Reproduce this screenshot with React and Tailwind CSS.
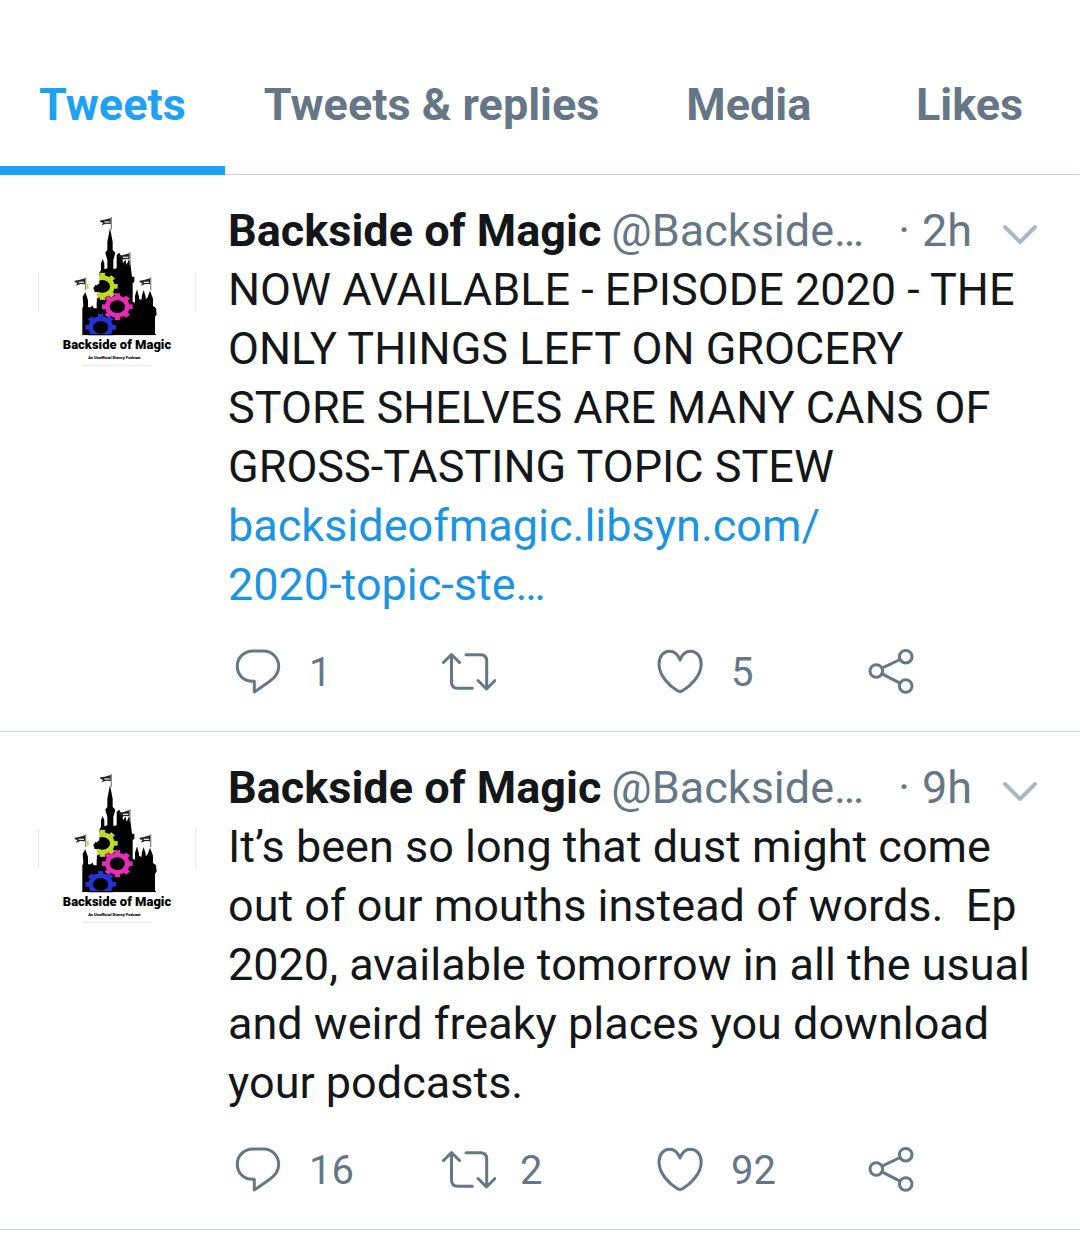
import React from 'react'

const tabs = [
  { id: 'tweets', label: 'Tweets', grow: false },
  { id: 'replies', label: 'Tweets & replies', grow: false },
  { id: 'media', label: 'Media', grow: true },
  { id: 'likes', label: 'Likes', grow: true },
]

const tweets = [
  {
    id: 1,
    time: '2h',
    text: 'NOW AVAILABLE - EPISODE 2020 - THE ONLY THINGS LEFT ON GROCERY STORE SHELVES ARE MANY CANS OF GROSS-TASTING TOPIC STEW',
    link: ['backsideofmagic.libsyn.com/', '2020-topic-ste…'],
    replies: 1,
    retweets: null,
    likes: 5,
  },
  {
    id: 2,
    time: '9h',
    text: 'It’s been so long that dust might come out of our mouths instead of words.  Ep 2020, available tomorrow in all the usual and weird freaky places you download your podcasts.',
    link: null,
    replies: 16,
    retweets: 2,
    likes: 92,
  },
]

const gearTeeth = [0, 45, 90, 135, 180, 225, 270, 315]

const Gear = ({ x, y, color }) => (
  <g transform={`translate(${x} ${y})`}>
    {gearTeeth.map((angle) => (
      <rect key={angle} x="-8" y="-46" width="16" height="18" fill={color} transform={`scale(1 0.88) rotate(${angle})`} />
    ))}
    <ellipse rx="30" ry="26" fill="#000" stroke={color} strokeWidth="14" />
  </g>
)

const Flag = ({ x, y }) => (
  <g transform={`translate(${x} ${y})`}>
    <path d="M0 0V38" stroke="#888" strokeWidth="4" />
    <path d="M-2 3L-20 8L-33 10V15L-25 17L-29 25L-16 20L-2 21Z" fill="#222" />
    <path d="M-21 15H-5" stroke="#ddd" strokeWidth="4" />
  </g>
)

const Avatar = () => (
  <svg viewBox="24 27 474 474" className="h-[158px] w-[158px]" role="img" aria-label="Backside of Magic">
    <path d="M25 215V335M497 215V335" stroke="#e6e6e6" strokeWidth="3" />
    <path d="M155 496H365" stroke="#f1f1f1" strokeWidth="7" />
    <path
      d="M157 404V325L160 318L158 290L166 277L174 300V322H183L187 316L191 325H200V295H206V222L213 210V190L218 177L223 190V208L232 205V180L226 158L232 150V125L240 84L248 125V150L256 158L250 180V207L260 205V165L268 158L275 172L280 190L286 178L290 194L296 180L300 182L306 230H313V245L308 250V305L315 308V288L321 268L327 290V296L334 300L336 286L341 270L347 290V298L353 292L360 272L369 296V318L378 324L380 344L375 350V404Z"
      fill="#000"
    />
    <Flag x={244} y={51} />
    <Flag x={300} y={157} />
    <Flag x={167} y={232} />
    <Flag x={362} y={232} />
    <Gear x={217} y={259} color="#bddb24" />
    <path d="M176 220H208V250L200 256V306H176Z" fill="#fff" />
    <path d="M190 264L197 254L204 260V276H194Z" fill="#000" />
    <Gear x={262} y={320} color="#e62bb5" />
    <Gear x={212} y={382} color="#2233d8" />
    <path d="M157 404H378" stroke="#000" strokeWidth="4" />
    <rect x="157" y="406" width="222" height="20" fill="#fff" />
    <text x="261" y="447" textAnchor="middle" fontSize="39" fontWeight="900" fill="#000">
      Backside of Magic
    </text>
    <text x="253" y="478" textAnchor="middle" fontSize="12" fontWeight="900" fill="#000">
      An Unofficial Disney Podcast
    </text>
  </svg>
)

const Icon = ({ children }) => (
  <svg
    viewBox="0 0 54 48"
    className="h-12 w-[54px] shrink-0"
    fill="none"
    stroke="currentColor"
    strokeWidth="3"
    strokeLinecap="round"
    strokeLinejoin="round"
    aria-hidden="true"
  >
    {children}
  </svg>
)

const ReplyIcon = () => (
  <Icon>
    <path d="M22 4h10.500C41 4 47.700 11 47.700 19.500c0 6.500-3.500 11-9.200 15L23.300 45V34.300H21.500C13 34.300 6.300 28 6.300 19.300S13 4 22 4Z" />
  </Icon>
)

const RetweetIcon = () => (
  <Icon>
    <path d="M1.500 15.500L9.500 7.500L17.500 15.500M9.500 8V35q0 6.300 6.300 6.300H30.300" />
    <path d="M24 7.700H38.500q6.200 0 6.200 6.200V41.500M36 33.500L44.500 42L53 33.500" />
  </Icon>
)

const LikeIcon = () => (
  <Icon>
    <path d="M27 13C25 7.500 21.500 4.200 16.500 4.200C10.500 4.200 6 9.500 6 17C6 29 17 39.500 24.500 43.700Q27 45.200 29.500 43.700C37 39.500 48.200 29 48.200 17C48.200 9.500 43.500 4.200 37.500 4.200C32.500 4.200 29 7.500 27 13Z" />
  </Icon>
)

const ShareIcon = () => (
  <Icon>
    <circle cx="12.300" cy="24" r="6.300" />
    <circle cx="41.700" cy="9.700" r="6.300" />
    <circle cx="41.700" cy="39" r="6.300" />
    <path d="M18 21.200L36 12.500M18 26.800L36 36.200" />
  </Icon>
)

const Action = ({ label, icon: ActionIcon, count }) => (
  <button type="button" aria-label={label} className="flex h-12 items-center gap-6 text-[40px] leading-[48px]">
    <ActionIcon />
    {count && <span className="pt-1">{count}</span>}
  </button>
)

const Tweet = ({ tweet }) => (
  <article className="flex items-start border-b border-[#ccd6dd] pt-[26px] pb-9 pl-[38px]">
    <a href="#profile" className="mt-2 shrink-0">
      <Avatar />
    </a>
    <div className="ml-8 min-w-0 flex-1">
      <header className="flex items-center pr-[42px]">
        <h2 className="font-bold whitespace-nowrap text-[#14171a]">Backside of Magic</h2>
        <a href="#profile" className="ml-2.5 whitespace-nowrap text-[#657786]">@Backside…</a>
        <span className="ml-auto text-[#657786]">·</span>
        <a href="#status" className="ml-3 text-[#657786]">{tweet.time}</a>
        <button type="button" aria-label="More" className="ml-[30px] text-[#aab8c2]">
          <svg viewBox="0 0 36 24" className="mt-2 h-6 w-9" fill="none" stroke="currentColor" strokeWidth="4" strokeLinecap="round" strokeLinejoin="round">
            <path d="M3 4L18 19L33 4" />
          </svg>
        </button>
      </header>
      <p className="pr-10 whitespace-pre-wrap">
        {tweet.text}
        {tweet.link && (
          <a href="#episode" className="block text-[#1b95e0]">
            {tweet.link[0]}
            <br />
            {tweet.link[1]}
          </a>
        )}
      </p>
      <div className="mt-[33px] mr-[5px] ml-[3px] grid grid-cols-4 text-[#657786]">
        <Action label="Reply" icon={ReplyIcon} count={tweet.replies} />
        <Action label="Retweet" icon={RetweetIcon} count={tweet.retweets} />
        <Action label="Like" icon={LikeIcon} count={tweet.likes} />
        <Action label="Share" icon={ShareIcon} />
      </div>
    </div>
  </article>
)

const App = () => {
  const [activeTab, setActiveTab] = React.useState('tweets')

  return (
    <main className="bg-white font-['Roboto',sans-serif] text-[45px] leading-[59px] text-[#14171a]">
      <nav className="flex border-b border-[#ccd6dd] pt-[35px]">
        {tabs.map((tab) => (
          <button
            key={tab.id}
            type="button"
            onClick={() => setActiveTab(tab.id)}
            className={`relative h-[139px] px-[39px] font-bold whitespace-nowrap ${tab.grow ? 'flex-1' : ''} ${
              activeTab === tab.id ? 'text-[#1da1f2]' : 'text-[#657786]'
            }`}
          >
            {tab.label}
            {activeTab === tab.id && <span className="absolute inset-x-0 -bottom-px h-[9px] bg-[#1da1f2]" />}
          </button>
        ))}
      </nav>
      {tweets.map((tweet) => (
        <Tweet key={tweet.id} tweet={tweet} />
      ))}
    </main>
  )
}

export default App
